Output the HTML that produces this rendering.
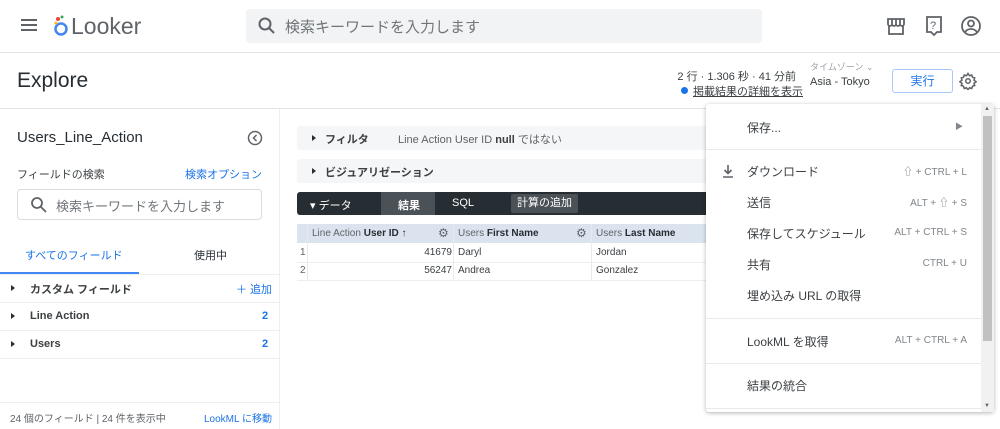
<!DOCTYPE html>
<html><head><meta charset="utf-8"><style>
*{box-sizing:border-box;margin:0;padding:0}
body{width:1000px;height:429px;overflow:hidden;background:#fff;font-family:"Liberation Sans","Noto Sans CJK JP",sans-serif;color:#262d33;position:relative}
.a{position:absolute;white-space:nowrap}
.blue{color:#1a73e8}
.tri{position:absolute;width:0;height:0;border-top:3.5px solid transparent;border-bottom:3.5px solid transparent;border-left:4px solid #262d33}
</style></head><body>
<!-- header -->
<div class="a" style="left:0;top:0;width:1000px;height:53px;border-bottom:1px solid #e4e4e4"></div>
<div class="a" style="left:21px;top:19px;width:16px;height:2px;background:#5f6368;box-shadow:0 5px 0 #5f6368,0 10px 0 #5f6368"></div>
<svg class="a" style="left:53px;top:14px" width="16" height="24"><circle cx="8" cy="15" r="5.5" fill="none" stroke="#4285f4" stroke-width="2.5"/><circle cx="5" cy="5" r="2" fill="#ea4335"/><circle cx="9" cy="3" r="1.5" fill="#34a853"/><circle cx="3" cy="9" r="1.5" fill="#fbbc04"/></svg>
<div class="a" style="left:71px;top:13px;font-size:23px;color:#5f6368">Looker</div>
<div class="a" style="left:246px;top:9px;width:516px;height:34px;background:#f1f3f4;border-radius:4px"></div>
<svg class="a" style="left:257px;top:16px" width="20" height="20"><circle cx="8" cy="8" r="5.5" fill="none" stroke="#5f6368" stroke-width="2"/><path d="M12 12l5 5" stroke="#5f6368" stroke-width="2"/></svg>
<div class="a" style="left:285px;top:16px;font-size:15px;color:#70757a">検索キーワードを入力します</div>
<svg class="a" style="left:886px;top:16px" width="20" height="20" fill="none" stroke="#5f6368" stroke-width="1.8"><path d="M2 3h16v5a2 2 0 0 1-4 0a2 2 0 0 1-4 0a2 2 0 0 1-4 0a2 2 0 0 1-4 0z M3 10v8h14v-8 M6 3v5 M10 3v5 M14 3v5"/></svg>
<svg class="a" style="left:924px;top:15px" width="20" height="22" fill="none" stroke="#5f6368" stroke-width="1.8"><path d="M3 2h14v15h-4l-3 3-3-3H3z"/><text x="6" y="14" font-size="11" fill="#5f6368" stroke="none" font-family="Liberation Sans">?</text></svg>
<svg class="a" style="left:960px;top:15px" width="22" height="22" fill="none" stroke="#5f6368" stroke-width="1.8"><circle cx="11" cy="11" r="9"/><circle cx="11" cy="8.5" r="3"/><path d="M5 17c3-4 9-4 12 0"/></svg>
<!-- explore bar -->
<div class="a" style="left:0;top:108px;width:1000px;border-top:1px solid #e4e4e4"></div>
<div class="a" style="left:17px;top:69px;font-size:21px;color:#262d33">Explore</div>
<div class="a" style="right:204px;top:68px;font-size:11px;color:#3c4043">2 行 · 1.306 秒 · 41 分前</div>
<div class="a" style="left:681px;top:87px;width:7px;height:7px;border-radius:50%;background:#1a73e8"></div>
<div class="a" style="left:693px;top:83px;font-size:11px;color:#3c4043;text-decoration:underline">掲載結果の詳細を表示</div>
<div class="a" style="left:810px;top:62px;font-size:9px;line-height:11px;color:#9aa0a6">タイムゾーン ⌄</div>
<div class="a" style="left:810px;top:76px;font-size:11px;line-height:12px;color:#3c4043">Asia - Tokyo</div>
<div class="a" style="left:892px;top:69px;width:61px;height:24px;border:1px solid #a8c7fa;border-radius:3px;font-size:12px;color:#1a73e8;text-align:center;line-height:22px">実行</div>
<svg class="a" style="left:959px;top:72px" width="18" height="18" viewBox="0 0 24 24" fill="none" stroke="#5f6368" stroke-width="2"><circle cx="12" cy="12" r="3"/><path d="M12 2l2 3 3-1 1 3 3 1-1 3 3 2-3 2 1 3-3 1-1 3-3-1-2 3-2-3-3 1-1-3-3-1 1-3-3-2 3-2-1-3 3-1 1-3 3 1z"/></svg>
<!-- left panel -->
<div class="a" style="left:279px;top:109px;height:320px;border-left:1px solid #eceff1"></div>
<div class="a" style="left:17px;top:129px;font-size:15px">Users_Line_Action</div>
<svg class="a" style="left:247px;top:130px" width="16" height="16" fill="none" stroke="#5f6368" stroke-width="1.5"><circle cx="8" cy="8" r="6.5"/><path d="M9.5 5l-3 3 3 3"/></svg>
<div class="a" style="left:17px;top:166px;font-size:11px;color:#3c4043">フィールドの検索</div>
<div class="a blue" style="left:185px;top:166px;font-size:11px">検索オプション</div>
<div class="a" style="left:17px;top:189px;width:245px;height:31px;border:1px solid #dadce0;border-radius:4px"></div>
<svg class="a" style="left:30px;top:196px" width="18" height="18"><circle cx="7" cy="7" r="5" fill="none" stroke="#5f6368" stroke-width="1.8"/><path d="M11 11l5 5" stroke="#5f6368" stroke-width="1.8"/></svg>
<div class="a" style="left:56px;top:196px;font-size:13px;color:#70757a">検索キーワードを入力します</div>
<div class="a blue" style="left:25px;top:247px;font-size:11px">すべてのフィールド</div>
<div class="a" style="left:194px;top:247px;font-size:11px;color:#262d33">使用中</div>
<div class="a" style="left:0;top:272px;width:139px;height:2px;background:#4285f4"></div>
<div class="a" style="left:0;top:274px;width:279px;border-top:1px solid #eceff1"></div>
<div class="a" style="left:0;top:302px;width:279px;border-top:1px solid #eceff1"></div>
<div class="a" style="left:0;top:330px;width:279px;border-top:1px solid #eceff1"></div>
<div class="a" style="left:0;top:358px;width:279px;border-top:1px solid #eceff1"></div>
<div class="tri" style="left:11px;top:285px"></div>
<div class="a" style="left:30px;top:281px;font-size:11px;font-weight:bold;color:#3c4043">カスタム フィールド</div>
<div class="a blue" style="left:236px;top:281px;font-size:11px">＋ 追加</div>
<div class="tri" style="left:11px;top:313px"></div>
<div class="a" style="left:30px;top:310px;font-size:11px;font-weight:bold;color:#3c4043">Line Action</div>
<div class="a blue" style="left:262px;top:310px;font-size:11px;font-weight:bold">2</div>
<div class="tri" style="left:11px;top:341px"></div>
<div class="a" style="left:30px;top:338px;font-size:11px;font-weight:bold;color:#3c4043">Users</div>
<div class="a blue" style="left:262px;top:338px;font-size:11px;font-weight:bold">2</div>
<div class="a" style="left:0;top:402px;width:279px;border-top:1px solid #eceff1"></div>
<div class="a" style="left:10px;top:410px;font-size:10px;color:#5f6368">24 個のフィールド | 24 件を表示中</div>
<div class="a blue" style="left:204px;top:410px;font-size:10px">LookML に移動</div>
<!-- main -->
<div class="a" style="left:297px;top:126px;width:420px;height:24px;background:#f5f6f7;border-radius:3px"></div>
<div class="tri" style="left:312px;top:135px"></div>
<div class="a" style="left:325px;top:131px;font-size:11px;font-weight:bold;color:#3c4043">フィルタ</div>
<div class="a" style="left:398px;top:131px;font-size:11px;color:#5f6368">Line Action User ID <b style="color:#3c4043">null</b> ではない</div>
<div class="a" style="left:297px;top:159px;width:420px;height:24px;background:#f5f6f7;border-radius:3px"></div>
<div class="tri" style="left:312px;top:168px"></div>
<div class="a" style="left:325px;top:164px;font-size:11px;font-weight:bold;color:#3c4043">ビジュアリゼーション</div>
<div class="a" style="left:297px;top:192px;width:420px;height:23px;background:#262d33;border-radius:3px 0 0 3px"></div>
<div class="a" style="left:381px;top:192px;width:54px;height:23px;background:#4a5157"></div>
<div class="a" style="left:310px;top:197px;font-size:11px;color:#fff">▾ データ</div>
<div class="a" style="left:398px;top:197px;font-size:11px;color:#fff;font-weight:bold">結果</div>
<div class="a" style="left:452px;top:197px;font-size:11px;color:#fff">SQL</div>
<div class="a" style="left:511px;top:194px;width:67px;height:19px;background:#4a5157;border-radius:2px;font-size:11px;color:#fff;text-align:center;line-height:19px">計算の追加</div>
<div class="a" style="left:297px;top:224px;width:420px;height:19px;background:#dbe4ee"></div>
<div class="a" style="left:307px;top:224px;height:56px;border-left:1px solid #e8eaed"></div>
<div class="a" style="left:453px;top:224px;height:56px;border-left:1px solid #e8eaed"></div>
<div class="a" style="left:591px;top:224px;height:56px;border-left:1px solid #e8eaed"></div>
<div class="a" style="left:312px;top:228px;font-size:10px;color:#5f6368">Line Action <b style="color:#262d33">User ID ↑</b></div>
<div class="a" style="left:438px;top:226px;font-size:12px;color:#5f6368">⚙</div>
<div class="a" style="left:458px;top:228px;font-size:10px;color:#5f6368">Users <b style="color:#262d33">First Name</b></div>
<div class="a" style="left:576px;top:226px;font-size:12px;color:#5f6368">⚙</div>
<div class="a" style="left:596px;top:228px;font-size:10px;color:#5f6368">Users <b style="color:#262d33">Last Name</b></div>
<div class="a" style="left:297px;top:262px;width:420px;border-top:1px solid #eceff1"></div>
<div class="a" style="left:297px;top:280px;width:420px;border-top:1px solid #eceff1"></div>
<div class="a" style="left:300px;top:247px;font-size:10px;color:#5f6368">1</div>
<div class="a" style="left:300px;top:265px;font-size:10px;color:#5f6368">2</div>
<div class="a" style="right:548px;top:247px;font-size:10px;color:#3c4043">41679</div>
<div class="a" style="right:548px;top:265px;font-size:10px;color:#3c4043">56247</div>
<div class="a" style="left:458px;top:247px;font-size:10px;color:#3c4043">Daryl</div>
<div class="a" style="left:458px;top:265px;font-size:10px;color:#3c4043">Andrea</div>
<div class="a" style="left:596px;top:247px;font-size:10px;color:#3c4043">Jordan</div>
<div class="a" style="left:596px;top:265px;font-size:10px;color:#3c4043">Gonzalez</div>
<!-- menu -->
<div class="a" style="left:706px;top:104px;width:288px;height:308px;background:#fff;box-shadow:0 1px 4px rgba(0,0,0,.3);border-radius:3px"></div>
<div class="a" style="left:981px;top:104px;width:13px;height:308px;background:#f1f1f1"></div>
<div class="a" style="left:983px;top:116px;width:9px;height:225px;background:#c1c1c1"></div>
<div class="a" style="left:984px;top:106px;font-size:6px;color:#666">▲</div>
<div class="a" style="left:984px;top:403px;font-size:6px;color:#666">▼</div>
<div class="a" style="left:747px;top:119px;font-size:12px;color:#3c4043">保存...</div>
<div class="a" style="left:955px;top:121px;font-size:8px;color:#80868b">▶</div>
<div class="a" style="left:706px;top:149px;width:275px;border-top:1px solid #e8eaed"></div>
<svg class="a" style="left:721px;top:164px" width="14" height="14" fill="none" stroke="#5f6368" stroke-width="1.6"><path d="M7 1v8M3.5 6l3.5 3.5 3.5-3.5M2 13h10"/></svg>
<div class="a" style="left:747px;top:163px;font-size:12px;color:#3c4043">ダウンロード</div>
<div class="a" style="right:33px;top:163px;font-size:10px;color:#80868b">⇧ + CTRL + L</div>
<div class="a" style="left:747px;top:194px;font-size:12px;color:#3c4043">送信</div>
<div class="a" style="right:33px;top:194px;font-size:10px;color:#80868b">ALT + ⇧ + S</div>
<div class="a" style="left:747px;top:225px;font-size:12px;color:#3c4043">保存してスケジュール</div>
<div class="a" style="right:33px;top:227px;font-size:10px;color:#80868b">ALT + CTRL + S</div>
<div class="a" style="left:747px;top:256px;font-size:12px;color:#3c4043">共有</div>
<div class="a" style="right:33px;top:258px;font-size:10px;color:#80868b">CTRL + U</div>
<div class="a" style="left:747px;top:287px;font-size:12px;color:#3c4043">埋め込み URL の取得</div>
<div class="a" style="left:706px;top:318px;width:275px;border-top:1px solid #e8eaed"></div>
<div class="a" style="left:747px;top:333px;font-size:12px;color:#3c4043">LookML を取得</div>
<div class="a" style="right:33px;top:335px;font-size:10px;color:#80868b">ALT + CTRL + A</div>
<div class="a" style="left:706px;top:363px;width:275px;border-top:1px solid #e8eaed"></div>
<div class="a" style="left:747px;top:377px;font-size:12px;color:#3c4043">結果の統合</div>
<div class="a" style="left:706px;top:408px;width:275px;border-top:1px solid #e8eaed"></div>
</body></html>
